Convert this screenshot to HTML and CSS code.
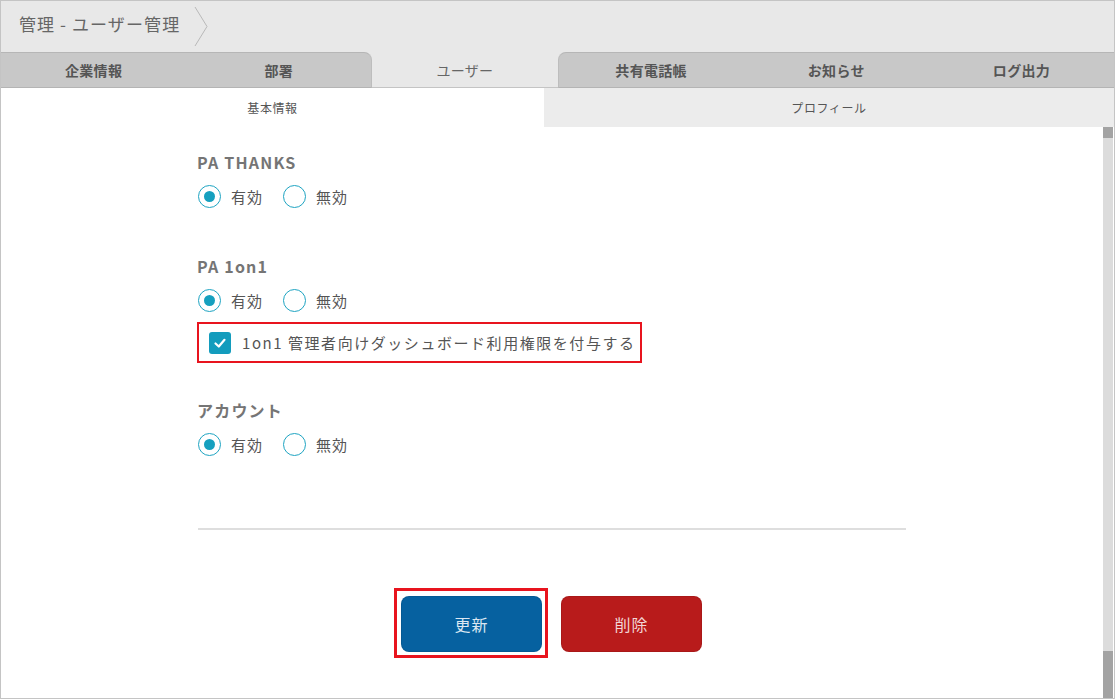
FILE: index.html
```html
<!DOCTYPE html>
<html lang="ja">
<head>
<meta charset="utf-8">
<link rel="stylesheet" href="styles.css">
</head>
<body>
<div class="frame">
  <div class="topbar">
    <span class="crumb">管理 - ユーザー管理</span>
    <svg class="chev" width="16" height="42" viewBox="0 0 16 42"><polyline points="1,1 13,20.5 1,40" fill="none" stroke="#b9b9b9" stroke-width="1"/></svg>
  </div>
  <div class="tabs">
    <div class="tab">企業情報</div>
    <div class="tab tab-before">部署</div>
    <div class="tab active">ユーザー</div>
    <div class="tab tab-after">共有電話帳</div>
    <div class="tab">お知らせ</div>
    <div class="tab">ログ出力</div>
  </div>
  <div class="subtabs">
    <div class="subtab active">基本情報</div>
    <div class="subtab">プロフィール</div>
  </div>
  <div class="body">
    <div class="content">
      <div class="section first">
        <div class="heading">PA THANKS</div>
        <div class="radios">
          <span class="radio checked"></span><span class="rlabel">有効</span>
          <span class="radio"></span><span class="rlabel">無効</span>
        </div>
      </div>
      <div class="section">
        <div class="heading">PA 1on1</div>
        <div class="radios">
          <span class="radio checked"></span><span class="rlabel">有効</span>
          <span class="radio"></span><span class="rlabel">無効</span>
        </div>
        <div class="checkrow">
          <span class="checkbox"><svg width="14" height="14" viewBox="0 0 14 14"><polyline points="2.5,7.5 5.8,10.5 11.5,3.8" fill="none" stroke="#fff" stroke-width="2.2" stroke-linecap="round" stroke-linejoin="round"/></svg></span>
          <span class="clabel">1on1 管理者向けダッシュボード利用権限を付与する</span>
        </div>
      </div>
      <div class="section third">
        <div class="heading">アカウント</div>
        <div class="radios">
          <span class="radio checked"></span><span class="rlabel">有効</span>
          <span class="radio"></span><span class="rlabel">無効</span>
        </div>
      </div>
      <div class="divider"></div>
      <div class="buttons">
        <div class="highlight"><button class="btn btn-update">更新</button></div>
        <button class="btn btn-delete">削除</button>
      </div>
    </div>
    <div class="scrollbar">
      <div class="thumb-top"></div>
      <div class="track"></div>
      <div class="thumb-bottom"></div>
    </div>
  </div>
</div>
</body>
</html>
```

FILE: styles.css
```css
* { box-sizing: border-box; }
html, body { margin: 0; padding: 0; }
body {
  width: 1115px;
  height: 699px;
  overflow: hidden;
  font-family: "Noto Sans CJK JP", "Noto Sans", sans-serif;
  color: #555;
  background: #fff;
}
.frame {
  width: 1115px;
  height: 699px;
  border: 1px solid #c4c4c4;
  display: flex;
  flex-direction: column;
  background: #fff;
}
.topbar {
  height: 51px;
  background: #e8e8e8;
  display: flex;
  align-items: center;
  padding-left: 18px;
  flex: none;
}
.crumb {
  font-size: 17px;
  color: #666;
  line-height: 1;
  margin-top: -7px;
  letter-spacing: 1.1px;
}
.chev { margin-left: 14px; margin-top: 0; }
.tabs {
  height: 36px;
  display: flex;
  background: #e8e8e8;
  flex: none;
}
.tab {
  flex: 1;
  background: #c8c8c8;
  border-top: 1px solid #b6b6b6;
  border-bottom: 1px solid #b4b4b4;
  display: flex;
  align-items: center;
  justify-content: center;
  font-size: 14px;
  font-weight: bold;
  color: #555;
  letter-spacing: 0.3px;
}
.tab.tab-before { border-top-right-radius: 8px; border-right: 1px solid #bdbdbd; }
.tab.tab-after { border-top-left-radius: 8px; border-left: 1px solid #bdbdbd; }
.tab.active {
  background: #e8e8e8;
  border-top: none;
  border-bottom: 1px solid #c4c4c4;
  border-radius: 8px 8px 0 0;
  font-weight: normal;
  color: #666;
}
.subtabs {
  height: 39px;
  display: flex;
  flex: none;
}
.subtab {
  flex: 1;
  display: flex;
  align-items: center;
  justify-content: center;
  font-size: 12px;
  color: #555;
  background: #ececec;
  letter-spacing: 0.6px;
}
.subtab.active { flex: 0 0 543px; background: #fff; }
.body {
  flex: 1;
  display: flex;
  min-height: 0;
}
.content {
  flex: 1;
  padding-left: 196px;
  padding-right: 197px;
}
.section.first { margin-top: 23px; }
.section { margin-top: 43px; }
.section.third { margin-top: 35px; }
.heading {
  font-size: 16px;
  font-weight: bold;
  color: #757575;
  line-height: 24px;
  height: 24px;
  letter-spacing: 1.2px;
}
.radios {
  display: flex;
  align-items: center;
  height: 30px;
  margin-top: 7px;
}
.radio {
  width: 23px;
  height: 23px;
  border: 1.5px solid #1ea4c2;
  border-radius: 50%;
  margin-left: 1px;
  display: flex;
  align-items: center;
  justify-content: center;
  background: #fff;
}
.radio.checked::after {
  content: "";
  width: 11px;
  height: 11px;
  border-radius: 50%;
  background: #16a0bf;
}
.rlabel {
  font-size: 15px;
  color: #555;
  margin-left: 10px;
  margin-right: 19px;
  letter-spacing: 1px;
}
.checkrow {
  margin-top: 7px;
  width: 445px;
  height: 41px;
  border: 2px solid #e8141e;
  display: flex;
  align-items: center;
  padding-left: 10px;
}
.checkbox {
  width: 22px;
  height: 22px;
  border-radius: 3px;
  background: #139cbd;
  display: flex;
  align-items: center;
  justify-content: center;
}
.clabel {
  font-size: 15px;
  color: #555;
  margin-left: 11px;
  letter-spacing: 1.55px;
  white-space: nowrap;
}
.divider {
  margin-top: 69px;
  height: 2px;
  background: #dedede;
  width: 708px;
  margin-left: 1px;
}
.buttons {
  margin-top: 58px;
  display: flex;
  align-items: center;
  padding-left: 197px;
  gap: 13px;
}
.highlight {
  border: 3px solid #e8141e;
  padding: 5px 3px 3px 4px;
}
.btn {
  width: 141px;
  height: 56px;
  border-radius: 8px;
  border: 1px solid rgba(0,0,0,0.08);
  font-family: "Noto Sans CJK JP", "Noto Sans", sans-serif;
  font-size: 16px;
  letter-spacing: 1px;
  color: #dbe7f2;
  display: block;
  padding: 0;
}
.btn-update { background: #0661a0; }
.btn-delete { background: #b81b1b; color: #f2d6d6; margin-top: 2px; }
.scrollbar {
  width: 10px;
  margin-right: 1px;
  display: flex;
  flex-direction: column;
  flex: none;
}
.thumb-top { height: 11px; background: #a3a3a3; }
.track { flex: 1; background: #dcdcdc; }
.thumb-bottom { height: 47px; background: #a3a3a3; }
```
